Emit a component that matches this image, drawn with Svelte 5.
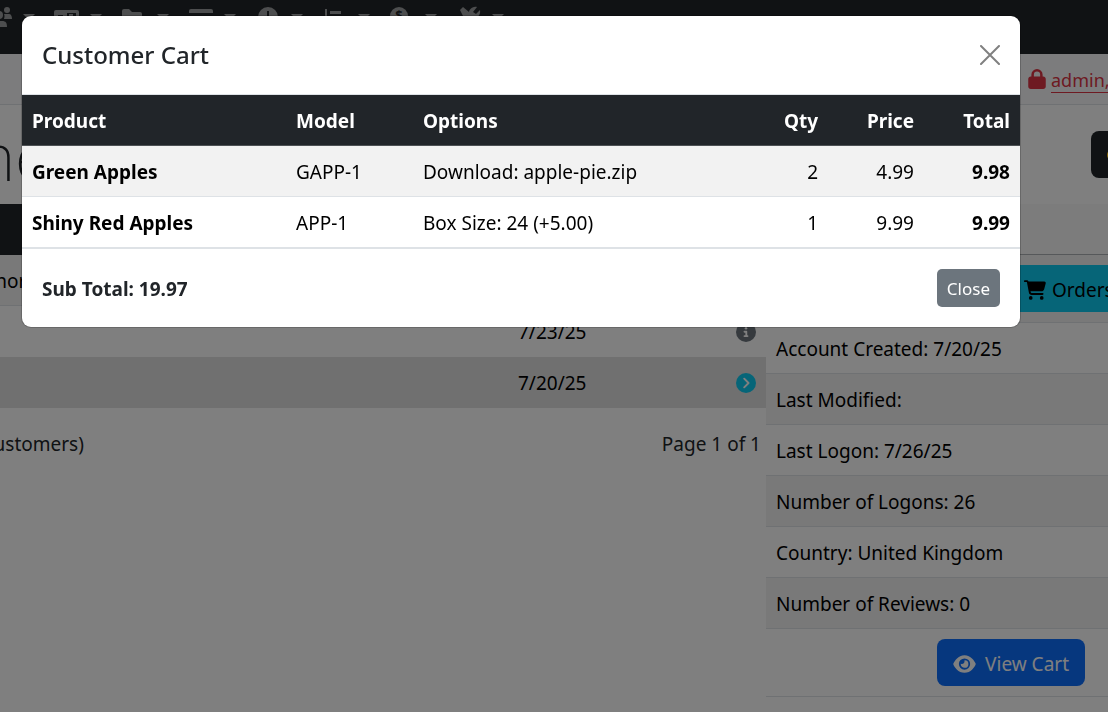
<script>
  const products = [
    { name: 'Green Apples', model: 'GAPP-1', options: 'Download: apple-pie.zip', qty: 2, price: '4.99', total: '9.98' },
    { name: 'Shiny Red Apples', model: 'APP-1', options: 'Box Size: 24 (+5.00)', qty: 1, price: '9.99', total: '9.99' }
  ];
  const facts = [
    'Account Created: 7/20/25',
    'Last Modified:',
    'Last Logon: 7/26/25',
    'Number of Logons: 26',
    'Country: United Kingdom',
    'Number of Reviews: 0'
  ];
  const menu = ['users', 'card', 'folder', 'window', 'clock', 'chart', 'coins', 'tools'];
</script>

<div class="viewport">
<div class="page">
  <nav class="topbar">
    {#each menu as item}
      <button class="menu" aria-label={item}>
        <svg class="glyph" viewBox="0 0 26 22" aria-hidden="true">
          {#if item === 'users'}
            <circle cx="5" cy="4" r="3" /><circle cx="21" cy="4" r="3" /><circle cx="13" cy="9" r="4" />
            <path d="M5 21c0-4 2-6 6-6h5c4 0 5 2 5 6zM18 8h5c2 0 3 2 3 5h-8q1-3 0-5z" />
          {:else if item === 'card'}
            <path fill-rule="evenodd" d="M3 4h21a2 2 0 0 1 2 2v13a2 2 0 0 1-2 2H3a2 2 0 0 1-2-2V6a2 2 0 0 1 2-2zm2 5v2h5V9zm9-2v8h9V7zm2 1h4v3h-4z" />
          {:else if item === 'folder'}
            <path d="M4 3h5l3 3h8a2 2 0 0 1 2 2v12H2V5a2 2 0 0 1 2-2z" />
          {:else if item === 'window'}
            <path d="M4 3h20a2 2 0 0 1 2 2v2H2V5a2 2 0 0 1 2-2zM2 10h24v10H2z" />
          {:else if item === 'clock'}
            <path fill-rule="evenodd" d="M14 1a10 10 0 1 1 0 20 10 10 0 0 1 0-20zm-1 4v8l5 3 1-2-4-2V5z" />
          {:else if item === 'chart'}
            <path d="M4 3h2v16h16v2H4zM9 5h11v3H9zM9 10h8v3H9zM9 15h13v3H9z" />
          {:else if item === 'coins'}
            <path d="M16 7l6 4v3h-8zM17 15h8v5H4v-2h13z" /><circle cx="11" cy="10" r="9" />
            <text x="11" y="14" text-anchor="middle">$</text>
          {:else}
            <path d="M5 4l3-3 6 5v3l8 8-3 3-8-8H9zM22 1l-4 5 3 2 4-4c1 5-3 9-7 7L8 21l-4-3 10-9c-1-5 3-9 8-8z" />
          {/if}
        </svg>
        <span class="caret"></span>
      </button>
    {/each}
  </nav>

  <div class="status">
    <svg class="lock" viewBox="0 0 448 512" aria-hidden="true"><path d="M144 144v48h160v-48a80 80 0 0 0-160 0zM80 192v-48a144 144 0 0 1 288 0v48h16c35 0 64 29 64 64v192c0 35-29 64-64 64H64c-35 0-64-29-64-64V256c0-35 29-64 64-64z" /></svg>
    <a href="#admin">admin, Logoff</a>
  </div>

  <header class="heading">
    <h1>Customers</h1>
    <button class="search" aria-label="Search"><span class="dot"></span></button>
  </header>

  <main class="columns">
    <section class="listing">
      <table class="customers">
        <thead><tr><th></th><th></th><th></th></tr></thead>
        <tbody>
          <tr class="lined"><td>Connor</td><td></td><td></td></tr>
          <tr><td></td><td>7/23/25</td><td class="action"><svg class="badge info" viewBox="0 0 512 512" aria-label="Info"><circle cx="256" cy="256" r="256" /><path d="M216 336h24v-64h-24c-30 0-30-48 0-48h48c13 0 24 11 24 24v88h8c30 0 30 48 0 48h-80c-30 0-30-48 0-48z" /><circle class="mark" cx="256" cy="160" r="32" /></svg></td></tr>
          <tr class="selected"><td></td><td>7/20/25</td><td class="action"><svg class="badge next" viewBox="0 0 512 512" aria-label="Selected"><circle cx="256" cy="256" r="256" /><path class="chevron" d="M210 145l111 111-111 111" /></svg></td></tr>
        </tbody>
      </table>
      <div class="pager"><span>Displaying 1 to 3 (of 3 customers)</span><span>Page 1 of 1</span></div>
    </section>

    <aside class="details">
      <div class="title"></div>
      <div class="actions">
        <button class="orders">
          <svg viewBox="0 0 576 512" aria-hidden="true"><path d="M0 24C0 11 11 0 24 0h46c22 0 41 13 50 32h411c26 0 45 25 38 50l-41 152c-9 32-38 54-70 54H171l5 29c3 11 12 19 24 19h288c32 0 32 48 0 48H200c-35 0-65-25-71-59L77 54c-1-4-4-6-7-6H24C11 48 0 37 0 24z" /><circle cx="176" cy="464" r="48" /><circle cx="464" cy="464" r="48" /></svg>
          <span>Orders</span>
        </button>
      </div>
      {#each facts as fact}
        <div class="fact">{fact}</div>
      {/each}
      <div class="view">
        <button class="viewcart">
          <svg viewBox="0 0 576 512" aria-hidden="true"><path fill-rule="evenodd" d="M288 32c-81 0-145 37-192 80C49 156 18 208 3 244c-3 8-3 16 0 24 15 36 46 88 93 132 47 43 111 80 192 80s145-37 192-80c47-44 78-96 93-132 3-8 3-16 0-24-15-36-46-88-93-132-47-43-111-80-192-80zM144 256a144 144 0 1 1 288 0 144 144 0 0 1-288 0zm144-64c0 35-29 64-64 64-7 0-14-1-20-3-6-2-12 1-12 7 2 52 45 92 96 92a96 96 0 0 0 7-192c-6 0-10 6-8 12 1 6 1 13 1 20z" /></svg>
          <span>View Cart</span>
        </button>
      </div>
    </aside>
  </main>
</div>
</div>

<div class="backdrop"></div>

<div class="modal" role="dialog" aria-labelledby="cart-title" aria-modal="true">
  <div class="modal-head">
    <h2 id="cart-title">Customer Cart</h2>
    <button class="dismiss" aria-label="Close dialog">
      <svg viewBox="0 0 20 20" aria-hidden="true"><path d="M1 1l18 18M19 1L1 19" /></svg>
    </button>
  </div>
  <table class="cart">
    <colgroup><col class="c-product" /><col class="c-model" /><col /><col class="c-qty" /><col class="c-price" /><col class="c-total" /></colgroup>
    <thead>
      <tr><th>Product</th><th>Model</th><th>Options</th><th class="num">Qty</th><th class="num">Price</th><th class="num">Total</th></tr>
    </thead>
    <tbody>
      {#each products as p}
        <tr>
          <th scope="row">{p.name}</th><td>{p.model}</td><td>{p.options}</td>
          <td class="num">{p.qty}</td><td class="num">{p.price}</td><td class="num strong">{p.total}</td>
        </tr>
      {/each}
    </tbody>
  </table>
  <div class="modal-foot">
    <strong>Sub Total: 19.97</strong>
    <button class="close">Close</button>
  </div>
</div>

<style>
  :global(body) {
    font-family: 'Segoe UI', 'Noto Sans', 'Open Sans', sans-serif;
    font-size: 19px;
    line-height: 30px;
    color: #212529;
    background: #fff;
  }
  * { box-sizing: border-box; }
  button { font: inherit; cursor: pointer; border: 0; }
  table { border-collapse: separate; border-spacing: 0; width: 100%; }

  .viewport { min-height: 100vh; overflow: hidden; }
  .page { margin: 0 -60px 0 -320px; }
  .topbar { display: flex; height: 54px; padding: 6px 0 0 306px; background: #212529; }
  .menu { display: flex; align-items: flex-start; gap: 11px; width: 67px; padding: 0; background: none; color: #9b9d9e; }
  .glyph { width: 26px; height: 22px; fill: currentColor; }
  .glyph text { font-size: 13px; font-weight: 700; fill: #212529; }
  .caret { margin-top: 8px; border: 6px solid transparent; border-top-color: currentColor; border-bottom: 0; }

  .status { display: flex; justify-content: flex-end; align-items: center; gap: 5px; height: 51px; background: #f8f9fa; border-bottom: 1px solid #dee2e6; color: #dc3545; }
  .lock { width: 18px; height: 20px; fill: currentColor; }
  .status a { width: 117px; white-space: nowrap; color: inherit; text-decoration: none; font-size: 18px; line-height: 24px; padding-top: 2px; border-bottom: 1px solid currentColor; }

  .heading { display: flex; justify-content: space-between; align-items: center; height: 99px; padding-left: 108px; }
  .heading h1 { margin: 0; font-size: 66px; line-height: 84px; font-weight: 250; }
  .search { width: 77px; height: 47px; padding: 0 16px; border-radius: 8px; background: #212529; }
  .dot { display: block; width: 12px; height: 12px; border-radius: 6px; background: #ffc107; }

  .columns { display: grid; grid-template-columns: 1086px 1fr; }
  .customers th { height: 51px; padding: 0; background: #212529; }
  .customers td { height: 51px; padding: 10px; color: #000; }
  .customers tr.lined td { padding: 11px 10px 9px; background: #f2f2f2; border-bottom: 1px solid #dee2e6; }
  .customers tr.selected td { background: #e0e0e0; }
  .customers tr.lined td:nth-child(1), .customers td:nth-child(1) { width: 828px; padding-left: 280px; }
  .customers td.action { text-align: right; }
  .badge { display: block; width: 20px; height: 20px; margin-left: auto; }
  .badge.info { fill: #6c757d; }
  .badge.next { fill: #0dcaf0; }
  .badge path, .badge .mark { fill: #fff; }
  .badge .chevron { fill: none; stroke: #fff; stroke-width: 50; stroke-linecap: round; stroke-linejoin: round; }
  .pager { display: flex; justify-content: space-between; padding: 21px 5px 0 107px; }

  .details { color: #000; }
  .title { height: 51px; background: #f8f8f8; border-bottom: 1px solid #adb1b5; }
  .actions { height: 68px; padding: 10px 0; background: #f2f2f2; border-bottom: 1px solid #dee2e6; }
  .orders { display: flex; align-items: center; gap: 6px; width: 100%; height: 47px; padding: 2px 0 0 258px; background: #0dcaf0; color: #000; }
  .orders svg { width: 22px; height: 20px; fill: currentColor; }
  .fact { height: 51px; padding: 11px 10px 9px; border-bottom: 1px solid #dee2e6; }
  .fact:nth-child(even) { background: #f2f2f2; }
  .view { display: flex; justify-content: flex-end; padding: 10px 83px 10px 10px; border-bottom: 1px solid #dee2e6; }
  .viewcart { display: flex; align-items: center; gap: 9px; height: 47px; padding: 2px 16px 0; border-radius: 8px; background: #0d6efd; color: #fff; }
  .viewcart svg { width: 23px; height: 20px; fill: currentColor; }

  .backdrop { position: fixed; inset: 0; background: rgba(0, 0, 0, 0.5); }

  .modal { position: absolute; top: 16px; left: 22px; right: 88px; background: #fff; border-radius: 9px; overflow: hidden; box-shadow: 0 0 0 1px rgba(0, 0, 0, 0.18); }
  .modal-head { display: flex; justify-content: space-between; align-items: center; padding: 20px; border-bottom: 1px solid #dee2e6; }
  .modal-head h2 { margin: 0; font-size: 24px; line-height: 38px; font-weight: 500; }
  .dismiss { display: flex; padding: 0; background: none; }
  .dismiss svg { width: 20px; height: 20px; fill: none; stroke: #808080; stroke-width: 2; stroke-linecap: round; }
  .cart { table-layout: fixed; color: #000; }
  .cart th, .cart td { height: 51px; padding: 11px 10px 9px; border-bottom: 1px solid #dee2e6; text-align: left; }
  .cart thead th { background: #212529; color: #fff; border-color: #4d5154; }
  .cart tbody tr:first-child > * { background: #f2f2f2; }
  .cart .num { text-align: right; }
  .cart .strong { font-weight: 700; }
  .c-product { width: 264px; }
  .c-model { width: 127px; }
  .c-qty { width: 84px; }
  .c-price { width: 96px; }
  .c-total { width: 96px; }
  .modal-foot { display: flex; justify-content: space-between; align-items: center; padding: 20px; border-top: 1px solid #dee2e6; }
  .modal-foot strong { padding-top: 2px; }
  .close { height: 38px; padding: 2px 10px 0; border-radius: 5px; background: #6c757d; color: #fff; font-size: 17px; }
</style>
